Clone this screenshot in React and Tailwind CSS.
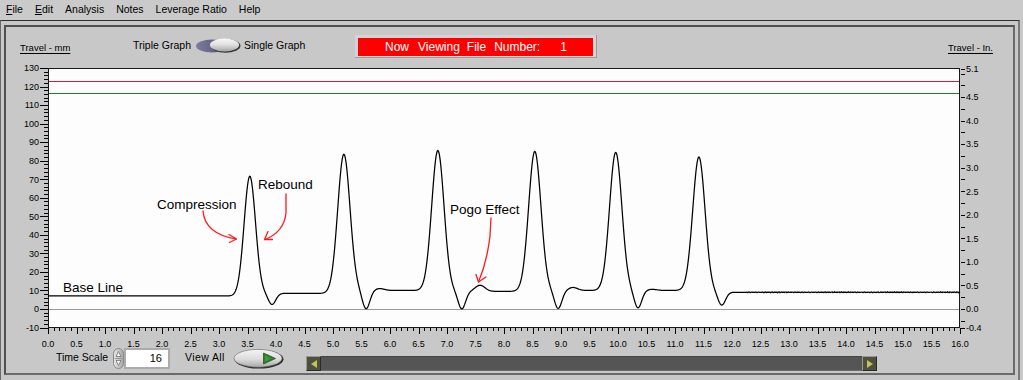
import React from "react";

const X = (t) => 48 + t * 57;
const Y = (mm) => 68 + (130 - mm) * (259.5 / 140);

const peaks = [
  { c: 3.54, h: 71.6, s: 0.1 },
  { c: 5.19, h: 83.5, s: 0.108 },
  { c: 6.84, h: 85.5, s: 0.108 },
  { c: 8.54, h: 85, s: 0.108 },
  { c: 9.96, h: 84.5, s: 0.108 },
  { c: 11.42, h: 82, s: 0.108 },
];
const levels = [7, 8.4, 10, 9.5, 10, 10, 9];
const dips = [
  { c: 3.93, a: -6, s: 0.065 },
  { c: 5.58, a: -10, s: 0.065 },
  { c: 7.26, a: -9.5, s: 0.065 },
  { c: 8.95, a: -9.8, s: 0.065 },
  { c: 10.35, a: -9.5, s: 0.065 },
  { c: 11.82, a: -7, s: 0.065 },
  { c: 5.82, a: 1, s: 0.08 },
  { c: 7.58, a: 3.3, s: 0.085 },
  { c: 9.21, a: 1.6, s: 0.08 },
  { c: 10.6, a: 0.6, s: 0.08 },
];
const smooth = (x) => (x <= 0 ? 0 : x >= 1 ? 1 : x * x * (3 - 2 * x));
const base = (t) => {
  let b = levels[0];
  peaks.forEach((p, i) => {
    b += (levels[i + 1] - levels[i]) * smooth((t - p.c + 0.2) / 0.4);
  });
  return b;
};
const amps = peaks.map((p) => p.h - base(p.c));
const sig = (t) => {
  let v = base(t);
  peaks.forEach((p, i) => {
    v += amps[i] * Math.exp(-((t - p.c) ** 2) / (2 * p.s * p.s));
  });
  dips.forEach((d) => {
    v += d.a * Math.exp(-((t - d.c) ** 2) / (2 * d.s * d.s));
  });
  if (t > 12.25) v += 0.2 * Math.sin(t * 131.7) * Math.sin(t * 23.3 + 1) + 0.1 * Math.sin(t * 311.1);
  return v;
};
const curvePts = Array.from({ length: 1601 }, (_, i) => {
  const t = i / 100;
  return `${X(t).toFixed(2)},${Y(sig(t)).toFixed(2)}`;
}).join(" ");

function MenuBar() {
  const items = [
    <span key="f"><span className="underline">F</span>ile</span>,
    <span key="e"><span className="underline">E</span>dit</span>,
    <span key="a">Analysis</span>,
    <span key="n">Notes</span>,
    <span key="l">Leverage Ratio</span>,
    <span key="h">Help</span>,
  ];
  return (
    <div className="h-[20px] flex items-center pl-[6px] gap-[12px] text-[10.5px] bg-[#cacaca] whitespace-nowrap">
      {items}
    </div>
  );
}

function Toggle() {
  return (
    <svg width="47" height="17" viewBox="0 0 47 17" className="block">
      <defs>
        <linearGradient id="tgk" x1="0" y1="0" x2="0" y2="1">
          <stop offset="0" stopColor="#f8f8f8" />
          <stop offset="0.5" stopColor="#dedede" />
          <stop offset="1" stopColor="#a6a6a6" />
        </linearGradient>
        <linearGradient id="tgg" x1="0" y1="0" x2="1" y2="0">
          <stop offset="0" stopColor="#7c7ca0" />
          <stop offset="1" stopColor="#4f4f70" />
        </linearGradient>
      </defs>
      <ellipse cx="17" cy="9" rx="16" ry="6.5" fill="url(#tgg)" />
      <ellipse cx="30.5" cy="8.8" rx="15" ry="6.9" fill="#3a3a3a" />
      <ellipse cx="29.5" cy="8" rx="14.6" ry="6.4" fill="url(#tgk)" />
    </svg>
  );
}

function Header() {
  return (
    <div className="h-[33px] flex items-start shrink-0 whitespace-nowrap">
      <div className="w-[127px] pl-[14px] pt-[15px] text-[9.5px] leading-[11px]">
        <span className="underline underline-offset-2">Travel - mm</span>
      </div>
      <div className="w-[62px] pt-[12px] text-[10.5px] leading-[13px]">Triple Graph</div>
      <div className="w-[47px] pt-[10px]">
        <Toggle />
      </div>
      <div className="w-[113px] pl-[2px] pt-[12px] text-[10.5px] leading-[13px]">Single Graph</div>
      <div className="mt-[8px] w-[242px] h-[23px] bg-[#d4d4d4] border-r border-b border-[#9c9c9c] pl-[3px] pt-[3px]">
        <div className="w-[235px] h-[18px] bg-[#ff0000] flex items-center pl-[27px] text-white text-[12px] leading-[14px]">
          <span>Now</span>
          <span className="ml-[9px]">Viewing</span>
          <span className="ml-[7px]">File</span>
          <span className="ml-[8px]">Number:</span>
          <span className="ml-[20px]">1</span>
        </div>
      </div>
      <div className="flex-1" />
      <div className="pr-[20px] pt-[15px] text-[9.5px] leading-[11px]">
        <span className="underline underline-offset-2">Travel - In.</span>
      </div>
    </div>
  );
}

function Chart() {
  const leftLines = [];
  const leftText = [];
  for (let v = -10; v <= 130; v += 2) {
    const y = Math.round(Y(v)) + 0.5;
    const major = v % 10 === 0;
    leftLines.push(<line key={"lt" + v} x1={major ? 40 : 44} x2={48} y1={y} y2={y} stroke="#000" strokeWidth="1" />);
    if (major)
      leftText.push(
        <text key={"ll" + v} x={39} y={Y(v) + 3.3} fontSize="9" textAnchor="end" fill="#000">
          {v}
        </text>
      );
  }
  const rightTicks = [];
  const rvals = [5.1, -0.4];
  for (let k = -1; k <= 20; k++) rvals.push(k * 0.25);
  rvals.forEach((v) => {
    const y = Math.round(Y(v * 25.4)) + 0.5;
    rightTicks.push(<line key={"rt" + v} x1={961} x2={965} y1={y} y2={y} stroke="#000" strokeWidth="1" />);
  });
  const rlabels = [
    [5.1, "5.1"],
    [4.5, "4.5"],
    [4.0, "4.0"],
    [3.5, "3.5"],
    [3.0, "3.0"],
    [2.5, "2.5"],
    [2.0, "2.0"],
    [1.5, "1.5"],
    [1.0, "1.0"],
    [0.5, "0.5"],
    [0.0, "0.0"],
    [-0.4, "-0.4"],
  ];
  const xLines = [];
  const xText = [];
  for (let i = 0; i <= 160; i++) {
    const x = Math.round(X(i / 10)) + 0.5;
    const major = i % 5 === 0;
    xLines.push(<line key={"xt" + i} x1={x} x2={x} y1={328} y2={major ? 334 : 331} stroke="#000" strokeWidth="1" />);
    if (major)
      xText.push(
        <text key={"xl" + i} x={X(i / 10)} y={347} fontSize="9" textAnchor="middle" fill="#000">
          {(i / 10).toFixed(1)}
        </text>
      );
  }
  return (
    <svg width="1007" height="288" viewBox="6 60 1007 288" className="block shrink-0">
      <rect x="48.5" y="68.5" width="911" height="259" fill="#fdfdfd" stroke="#1a1a1a" strokeWidth="1" />
      <g shapeRendering="crispEdges">
        <rect x="49" y="81" width="910" height="1" fill="#d0203a" />
        <rect x="49" y="93" width="910" height="1" fill="#1f801f" />
        <rect x="49" y="309" width="910" height="1" fill="#9a9a9a" />
      </g>
      <polyline points={curvePts} fill="none" stroke="#000" strokeWidth="1.25" strokeLinejoin="round" />
      <g shapeRendering="crispEdges">
        {leftLines}
        {rightTicks}
        {xLines}
      </g>
      {leftText}
      {xText}
      {rlabels.map(([v, s]) => (
        <text key={"rl" + s} x={966} y={Y(v * 25.4) + 3.3} fontSize="9" fill="#000">
          {s}
        </text>
      ))}
      <g fontSize="13.5" fill="#000">
        <text x="63" y="292">Base Line</text>
        <text x="157" y="209">Compression</text>
        <text x="258" y="189">Rebound</text>
        <text x="450" y="214">Pogo Effect</text>
      </g>
      <g fill="none" stroke="#ff1a1a" strokeWidth="1.3" strokeLinecap="round" strokeLinejoin="round">
        <path d="M203 211 Q205 234 236 239" />
        <path d="M229 234.5 L236.5 239 L229.5 242.5" />
        <path d="M286 194 L286 213 Q284 232 265 239.5" />
        <path d="M268 231.5 L264.5 239.5 L272.5 239.5" />
        <path d="M491 218 L490 236 Q487 262 478.5 282" />
        <path d="M476 274.5 L478.5 282 L486 277" />
      </g>
    </svg>
  );
}

function Spinner() {
  return (
    <svg width="11" height="21" viewBox="0 0 11 21" className="block">
      <defs>
        <linearGradient id="spg" x1="0" y1="0" x2="1" y2="0">
          <stop offset="0" stopColor="#e8e8e8" />
          <stop offset="1" stopColor="#a4a4a4" />
        </linearGradient>
      </defs>
      <rect x="0.5" y="0.5" width="10" height="20" rx="5" fill="url(#spg)" stroke="#8a8a8a" />
      <line x1="1.5" y1="10.5" x2="9.5" y2="10.5" stroke="#9a9a9a" />
      <path d="M3 8.5 L5.5 3.5 L8 8.5 Z" fill="#f2f2f2" stroke="#777" strokeWidth="0.8" />
      <path d="M3 12.5 L5.5 17.5 L8 12.5 Z" fill="#f2f2f2" stroke="#777" strokeWidth="0.8" />
    </svg>
  );
}

function PlayButton() {
  return (
    <svg width="51" height="21" viewBox="0 0 51 21" className="block">
      <defs>
        <linearGradient id="btg" x1="0" y1="0" x2="0" y2="1">
          <stop offset="0" stopColor="#f4f4f4" />
          <stop offset="0.55" stopColor="#dcdcdc" />
          <stop offset="1" stopColor="#a8a8a8" />
        </linearGradient>
      </defs>
      <ellipse cx="26" cy="11.2" rx="24.5" ry="9.4" fill="#2a2a2a" />
      <ellipse cx="25" cy="10.3" rx="24" ry="8.9" fill="url(#btg)" stroke="#6a6a6a" strokeWidth="0.6" />
      <path d="M30.5 5 L42.5 10.5 L30.5 16 Z" fill="#2f7d2f" stroke="#1f5a1f" strokeWidth="0.8" strokeLinejoin="round" />
      <path d="M32 7.5 L38 10.5 L32 13.5 Z" fill="#3f9a3f" />
    </svg>
  );
}

function ScrollBar() {
  return (
    <div className="w-[571px] h-[15px] flex mt-[8px] bg-[#545454]">
      <div className="w-[15px] h-[15px] bg-[#4f4f40] border border-t-[#9a9a8a] border-l-[#9a9a8a] border-r-[#2a2a2a] border-b-[#2a2a2a] flex items-center justify-center">
        <svg width="6" height="8" viewBox="0 0 6 8" className="block">
          <polygon points="6,0 0,4 6,8" fill="#c4c25a" />
        </svg>
      </div>
      <div className="flex-1 h-[15px] bg-[#555555] border-t border-b border-t-[#464646] border-b-[#6a6a6a]" />
      <div className="w-[15px] h-[15px] bg-[#4f4f40] border border-t-[#9a9a8a] border-l-[#9a9a8a] border-r-[#2a2a2a] border-b-[#2a2a2a] flex items-center justify-center">
        <svg width="6" height="8" viewBox="0 0 6 8" className="block">
          <polygon points="0,0 6,4 0,8" fill="#c4c25a" />
        </svg>
      </div>
    </div>
  );
}

function Bottom() {
  return (
    <div className="h-[25px] flex items-start shrink-0 whitespace-nowrap">
      <div className="w-[107px] pl-[50px] pt-[3px] text-[10.5px] leading-[13px]">Time Scale</div>
      <div className="w-[11px]">
        <Spinner />
      </div>
      <div className="w-[46px] h-[21px] bg-[#ababab] p-[2px]">
        <div className="h-[17px] bg-white text-right pr-[6px] text-[11px] leading-[17px]">16</div>
      </div>
      <div className="w-[15px]" />
      <div className="w-[48px] pt-[3px] text-[10.5px] leading-[13px] tracking-[0.4px]">View All</div>
      <div className="w-[51px]">
        <PlayButton />
      </div>
      <div className="ml-[22px]">
        <ScrollBar />
      </div>
    </div>
  );
}

export default function App() {
  return (
    <div className="w-[1023px] h-[380px] overflow-hidden bg-[#c8c8c8] font-['Liberation_Sans',Arial,sans-serif] text-black select-none">
      <MenuBar />
      <div className="h-[360px] w-[1020px] border-t border-l border-r-2 border-t-[#2e2e2e] border-l-[#6a6a6a] border-r-[#7a7a7a] pl-[3px] pt-[4px]">
        <div className="w-[1011px] h-[350px] border-2 border-t-[#505050] border-l-[#505050] border-r-[#6a6a6a] border-b-[#6a6a6a] flex flex-col">
          <Header />
          <Chart />
          <Bottom />
        </div>
      </div>
    </div>
  );
}
